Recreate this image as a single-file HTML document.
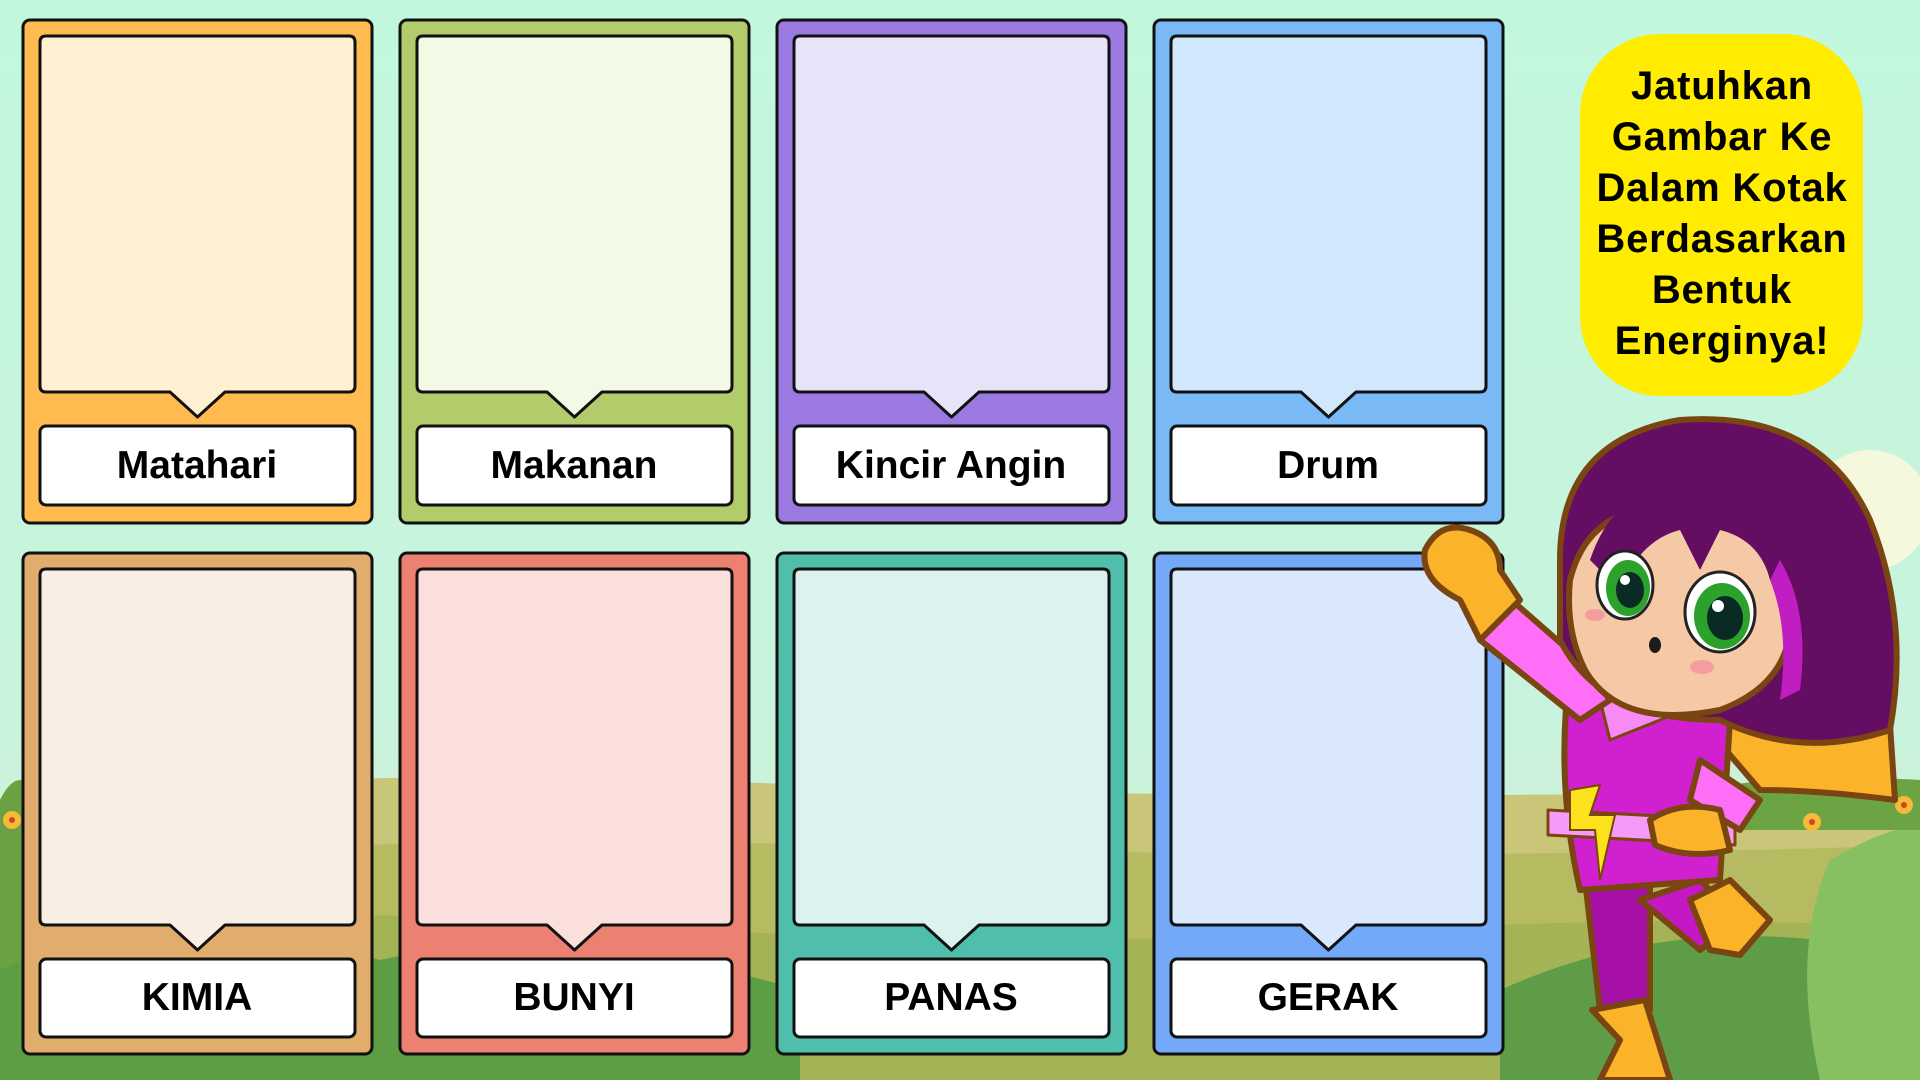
<!DOCTYPE html>
<html><head><meta charset="utf-8"><style>
html,body{margin:0;padding:0;width:1920px;height:1080px;overflow:hidden}
svg{display:block}
text{font-family:"Liberation Sans",sans-serif;font-weight:bold}
</style></head><body>
<svg width="1920" height="1080" viewBox="0 0 1920 1080" xmlns="http://www.w3.org/2000/svg">
<defs>
<linearGradient id="sky" x1="0" y1="0" x2="0" y2="1">
<stop offset="0" stop-color="#c1f8dd"/><stop offset="0.65" stop-color="#c8f3dc"/><stop offset="1" stop-color="#d6f0d2"/>
</linearGradient>
</defs>
<rect width="1920" height="1080" fill="url(#sky)"/>
<circle cx="1870" cy="510" r="60" fill="#f6f8de"/>
<path d="M0 800 Q400 760 900 790 Q1400 800 1920 790 L1920 1080 L0 1080Z" fill="#c9c67a"/>
<path d="M0 860 Q500 830 1000 850 Q1500 860 1920 845 L1920 1080 L0 1080Z" fill="#b6bb62"/>
<path d="M0 930 Q300 900 700 930 Q1100 950 1500 925 Q1750 915 1920 930 L1920 1080 L0 1080Z" fill="#a4b356"/>
<path d="M0 800 Q20 760 40 800 L40 1080 L0 1080Z" fill="#6aa241"/>
<path d="M0 970 Q150 900 380 960 Q560 920 800 990 L800 1080 L0 1080Z" fill="#5d9e45"/>
<path d="M880 760 Q920 720 960 780 L960 900 L880 900Z" fill="#7fae46"/>
<path d="M1500 990 Q1700 900 1920 960 L1920 1080 L1500 1080Z" fill="#5e9c48"/>
<path d="M1830 860 Q1900 820 1920 830 L1920 1080 L1820 1080 Q1790 950 1830 860Z" fill="#86c060"/>
<path d="M1660 800 Q1760 770 1920 780 L1920 830 L1660 830Z" fill="#6ca444"/>
<circle cx="12" cy="820" r="9" fill="#f6b93a"/><circle cx="12" cy="820" r="3" fill="#d2461d"/>
<circle cx="1812" cy="822" r="9" fill="#f6b93a"/><circle cx="1812" cy="822" r="3" fill="#d2461d"/>
<circle cx="1904" cy="805" r="9" fill="#f6b93a"/><circle cx="1904" cy="805" r="3" fill="#d2461d"/>

<g stroke="#111" stroke-width="3" stroke-linejoin="round">
<g transform="translate(23,20)">
<rect x="0" y="0" width="349" height="503" rx="7" fill="#ffbb4f"/>
<path d="M23 16 H326 Q332 16 332 22 V366 Q332 372 326 372 H202 L174.5 397 L147 372 H23 Q17 372 17 366 V22 Q17 16 23 16Z" fill="#fff0d2"/>
<rect x="17" y="406" width="315" height="79" rx="6" fill="#fff"/>
</g>
<g transform="translate(400,20)">
<rect x="0" y="0" width="349" height="503" rx="7" fill="#b2cc6c"/>
<path d="M23 16 H326 Q332 16 332 22 V366 Q332 372 326 372 H202 L174.5 397 L147 372 H23 Q17 372 17 366 V22 Q17 16 23 16Z" fill="#f2f9e4"/>
<rect x="17" y="406" width="315" height="79" rx="6" fill="#fff"/>
</g>
<g transform="translate(777,20)">
<rect x="0" y="0" width="349" height="503" rx="7" fill="#9a7ae1"/>
<path d="M23 16 H326 Q332 16 332 22 V366 Q332 372 326 372 H202 L174.5 397 L147 372 H23 Q17 372 17 366 V22 Q17 16 23 16Z" fill="#e7e3f9"/>
<rect x="17" y="406" width="315" height="79" rx="6" fill="#fff"/>
</g>
<g transform="translate(1154,20)">
<rect x="0" y="0" width="349" height="503" rx="7" fill="#78b9f6"/>
<path d="M23 16 H326 Q332 16 332 22 V366 Q332 372 326 372 H202 L174.5 397 L147 372 H23 Q17 372 17 366 V22 Q17 16 23 16Z" fill="#d1e7fb"/>
<rect x="17" y="406" width="315" height="79" rx="6" fill="#fff"/>
</g>
<g transform="translate(23,553)">
<rect x="0" y="0" width="349" height="501" rx="7" fill="#e0ad6c"/>
<path d="M23 16 H326 Q332 16 332 22 V366 Q332 372 326 372 H202 L174.5 397 L147 372 H23 Q17 372 17 366 V22 Q17 16 23 16Z" fill="#f8eee4"/>
<rect x="17" y="406" width="315" height="78" rx="6" fill="#fff"/>
</g>
<g transform="translate(400,553)">
<rect x="0" y="0" width="349" height="501" rx="7" fill="#ec8071"/>
<path d="M23 16 H326 Q332 16 332 22 V366 Q332 372 326 372 H202 L174.5 397 L147 372 H23 Q17 372 17 366 V22 Q17 16 23 16Z" fill="#fbdfdc"/>
<rect x="17" y="406" width="315" height="78" rx="6" fill="#fff"/>
</g>
<g transform="translate(777,553)">
<rect x="0" y="0" width="349" height="501" rx="7" fill="#4fbfab"/>
<path d="M23 16 H326 Q332 16 332 22 V366 Q332 372 326 372 H202 L174.5 397 L147 372 H23 Q17 372 17 366 V22 Q17 16 23 16Z" fill="#dbf2ee"/>
<rect x="17" y="406" width="315" height="78" rx="6" fill="#fff"/>
</g>
<g transform="translate(1154,553)">
<rect x="0" y="0" width="349" height="501" rx="7" fill="#73a9f8"/>
<path d="M23 16 H326 Q332 16 332 22 V366 Q332 372 326 372 H202 L174.5 397 L147 372 H23 Q17 372 17 366 V22 Q17 16 23 16Z" fill="#d9e8fc"/>
<rect x="17" y="406" width="315" height="78" rx="6" fill="#fff"/>
</g>
</g>
<g font-size="39" text-anchor="middle" fill="#000">
<text x="197" y="478">Matahari</text>
<text x="574" y="478">Makanan</text>
<text x="951" y="478">Kincir Angin</text>
<text x="1328" y="478">Drum</text>
<text x="197" y="1010">KIMIA</text>
<text x="574" y="1010">BUNYI</text>
<text x="951" y="1010">PANAS</text>
<text x="1328" y="1010">GERAK</text>
</g>

<rect x="1580" y="34" width="283" height="362" rx="80" fill="#ffec00"/>
<g font-size="40" text-anchor="middle" fill="#000" letter-spacing="0.8">
<text x="1722" y="99">Jatuhkan</text>
<text x="1722" y="150">Gambar Ke</text>
<text x="1722" y="201">Dalam Kotak</text>
<text x="1722" y="252">Berdasarkan</text>
<text x="1722" y="303">Bentuk</text>
<text x="1722" y="354">Energinya!</text>
</g>

<g stroke="#7a4511" stroke-width="6" stroke-linejoin="round">
<path d="M1700 720 Q1800 740 1890 725 L1895 800 Q1820 790 1760 790Z" fill="#fbb32a"/>
<path d="M1585 880 L1600 1010 L1650 1010 L1650 880Z" fill="#a811a8"/>
<path d="M1640 900 L1700 950 L1740 920 L1700 880Z" fill="#c318c3"/>
<path d="M1690 900 L1730 880 L1770 920 L1740 955 L1710 950Z" fill="#fbb32a"/>
<path d="M1592 1010 L1645 1000 L1670 1080 L1600 1080 L1620 1040Z" fill="#fbb32a"/>
<path d="M1570 670 L1680 650 L1730 720 L1720 880 L1580 890 Q1555 780 1570 670Z" fill="#d020d0"/>
<path d="M1548 810 L1735 820 L1735 845 L1548 835Z" fill="#f79af7" stroke-width="3"/>
<path d="M1590 660 L1680 650 L1710 700 L1610 740Z" fill="#f78af7" stroke-width="3"/>
<path d="M1500 590 L1580 660 L1610 700 L1580 720 L1480 640Z" fill="#ff6ef7"/>
<path d="M1425 550 Q1440 520 1470 530 Q1500 540 1500 570 L1520 600 L1480 640 L1460 600 Q1420 580 1425 550Z" fill="#fbb32a"/>
<path d="M1700 760 L1760 800 L1740 830 L1690 800Z" fill="#ff6ef7"/>
<path d="M1650 820 Q1680 800 1720 810 L1730 850 Q1690 860 1655 845Z" fill="#fbb32a"/>
<path d="M1560 560 Q1560 440 1680 420 Q1820 410 1870 520 Q1910 620 1890 730 Q1800 760 1720 720 Q1600 720 1560 640Z" fill="#650d62"/>
<path d="M1570 580 Q1590 500 1680 510 Q1770 520 1790 600 Q1800 680 1720 710 Q1620 730 1585 670 Q1565 630 1570 580Z" fill="#f5c9a5"/>
</g>
<path d="M1590 560 Q1620 470 1720 480 Q1780 500 1800 560 L1770 580 Q1760 540 1720 530 L1700 570 L1680 530 Q1640 540 1620 590Z" fill="#650d62"/>
<path d="M1780 560 Q1810 610 1800 690 L1780 700 Q1790 630 1770 580Z" fill="#c01ec0"/>
<ellipse cx="1625" cy="585" rx="28" ry="34" fill="#fff" stroke="#222" stroke-width="3"/>
<ellipse cx="1628" cy="588" rx="22" ry="28" fill="#2ca12c"/>
<ellipse cx="1630" cy="590" rx="14" ry="18" fill="#0a2b25"/>
<circle cx="1625" cy="580" r="5" fill="#fff"/>
<ellipse cx="1720" cy="612" rx="35" ry="40" fill="#fff" stroke="#222" stroke-width="3"/>
<ellipse cx="1722" cy="616" rx="28" ry="33" fill="#2ca12c"/>
<ellipse cx="1725" cy="618" rx="18" ry="22" fill="#0a2b25"/>
<circle cx="1718" cy="606" r="6" fill="#fff"/>
<ellipse cx="1655" cy="645" rx="6" ry="8" fill="#1b1b1b"/>
<ellipse cx="1595" cy="615" rx="10" ry="6" fill="#f59d9d"/>
<ellipse cx="1702" cy="667" rx="12" ry="7" fill="#f59d9d"/>
<path d="M1570 790 L1600 785 L1590 815 L1615 815 L1600 880 L1595 830 L1570 830 Z" fill="#fbe21c" stroke="#7a4511" stroke-width="2"/>
</svg>
</body></html>
